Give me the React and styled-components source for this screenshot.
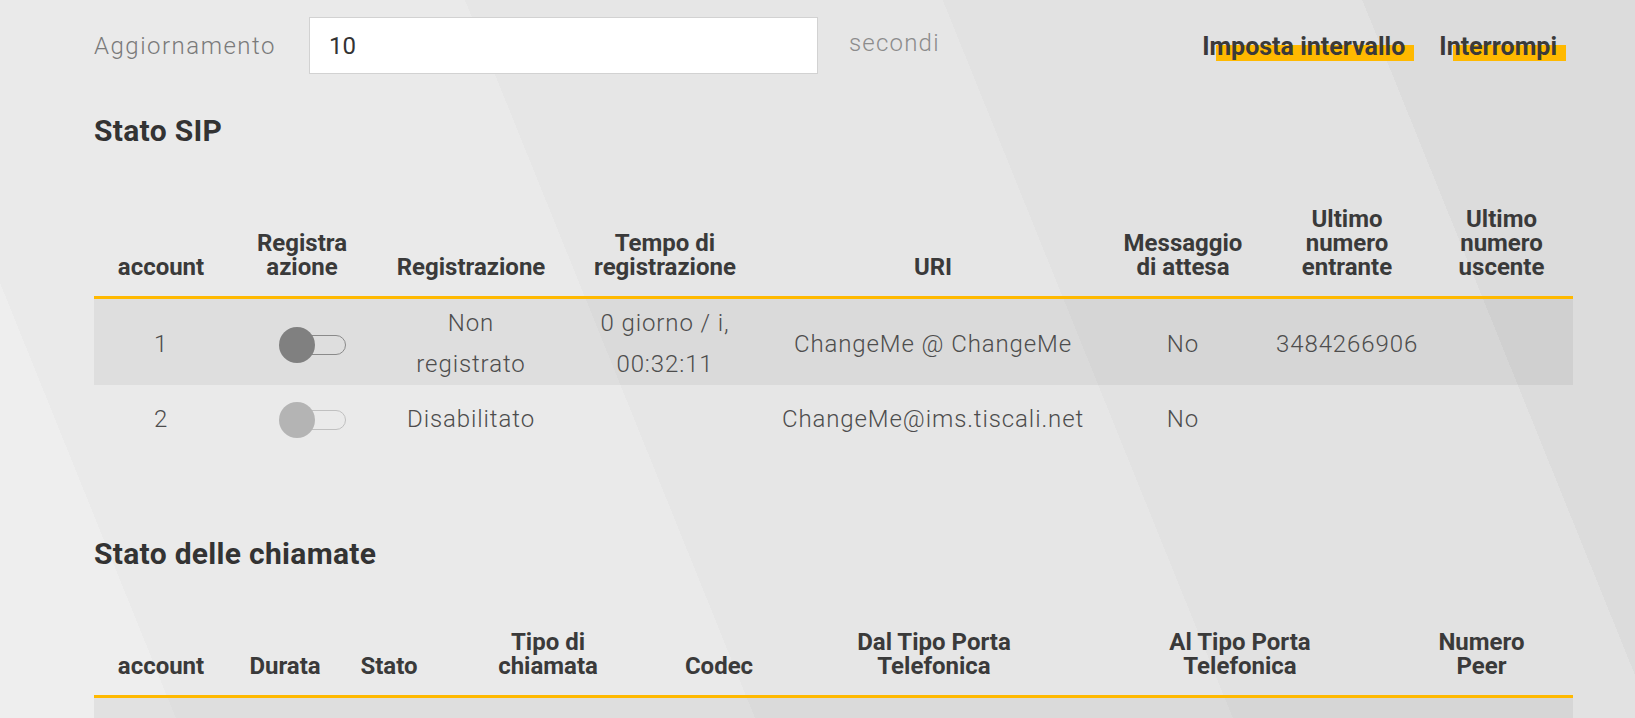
import React from "react";
import styled, { createGlobalStyle } from "styled-components";

const GlobalStyle = createGlobalStyle`
  html, body {
    margin: 0;
    padding: 0;
  }
  body {
    min-height: 100vh;
    font-family: Roboto, "Liberation Sans", sans-serif;
    color: #4d4d4d;
    background-color: #e8e8e8;
    /* soft diagonal panes of the router ui background */
    background-image: linear-gradient(
      68deg,
      #eeeeee 0px,
      #eeeeee 163px,
      #eaeaea 163px,
      #eaeaea 700px,
      #e6e6e6 700px,
      #e6e6e6 1143px,
      #e2e2e2 1143px,
      #e2e2e2 1532px,
      #dcdcdc 1532px
    );
    background-attachment: fixed;
  }
`;

const YELLOW = "#ffb900";

const Page = styled.main`
    padding: 17px 62px 40px 94px;
`;

const TopBar = styled.div`
    display: flex;
    align-items: center;
    height: 57px;
`;

const FieldLabel = styled.label`
    width: 215px;
    flex: 0 0 auto;
    font-size: 24px;
    font-weight: 300;
    letter-spacing: 1.5px;
    color: #7a7a7a;
`;

const IntervalInput = styled.input`
    box-sizing: border-box;
    width: 509px;
    height: 57px;
    padding: 0 19px;
    border: 1px solid #d2d2d2;
    background: #fff;
    font-family: inherit;
    font-size: 24px;
    color: #333;
    outline: none;
`;

const Unit = styled.span`
    margin: -5px 0 0 31px;
    font-size: 24px;
    font-weight: 300;
    letter-spacing: 1.2px;
    color: #8c8c8c;
`;

const Actions = styled.div`
    display: flex;
    gap: 34px;
    margin: 3px 16px 0 auto;
`;

const LinkButton = styled.button`
    position: relative;
    isolation: isolate;
    padding: 0;
    border: 0;
    background: none;
    font-family: inherit;
    font-size: 25px;
    font-weight: 700;
    line-height: 30px;
    color: #3a3a3a;
    cursor: pointer;

    &::after {
        content: "";
        position: absolute;
        left: 14px;
        right: -9px;
        top: 13px;
        height: 16px;
        background: ${YELLOW};
        z-index: -1;
    }
`;

const SectionTitle = styled.h2`
    margin: ${(p) => p.$top}px 0 0;
    font-size: 30px;
    font-weight: 700;
    line-height: 36px;
    letter-spacing: 0.3px;
    color: #333;
`;

const Table = styled.table`
    width: 100%;
    margin-top: 58px;
    border-collapse: collapse;
    table-layout: fixed;
`;

const Col = styled.col`
    width: ${(p) => p.$w}px;
`;

const Th = styled.th`
    padding: 0 6px 17px;
    border-bottom: 3px solid ${YELLOW};
    font-size: 24px;
    font-weight: 700;
    line-height: 24px;
    color: #3a3a3a;
    text-align: center;
    vertical-align: bottom;
    white-space: pre-line;
`;

const Row = styled.tr`
    height: ${(p) => p.$h || 64}px;
    background: ${(p) => (p.$shade ? "rgba(0, 0, 0, 0.05)" : "transparent")};
`;

const Td = styled.td`
    padding: 4px 12px 0;
    font-size: 24px;
    font-weight: 300;
    letter-spacing: 0.9px;
    line-height: 41px;
    color: #4d4d4d;
    text-align: center;
    vertical-align: middle;
    white-space: pre-line;
`;

const Switch = styled.span`
    position: relative;
    display: inline-block;
    width: 67px;
    height: 36px;
    margin-left: 21px;
    vertical-align: middle;
`;

const Track = styled.span`
    position: absolute;
    left: 11px;
    right: 0;
    top: 8px;
    height: 20px;
    box-sizing: border-box;
    border: 1px solid ${(p) => (p.$active ? "#8a8a8a" : "#c0c0c0")};
    border-radius: 10px;
`;

const Knob = styled.span`
    position: absolute;
    left: 0;
    top: 0;
    width: 36px;
    height: 36px;
    border-radius: 50%;
    background: ${(p) => (p.$active ? "#808080" : "#b4b4b4")};
`;

const Toggle = ({ active }) => (
    <Switch role="switch" aria-checked={false}>
        <Track $active={active} />
        <Knob $active={active} />
    </Switch>
);

const sipCols = [134, 148, 190, 198, 338, 162, 166, 143];
const sipHead = [
    "account",
    "Registra\nazione",
    "Registrazione",
    "Tempo di\nregistrazione",
    "URI",
    "Messaggio\ndi attesa",
    "Ultimo\nnumero\nentrante",
    "Ultimo\nnumero\nuscente",
];
const sipRows = [
    {
        id: 1,
        active: true,
        state: "Non\nregistrato",
        time: "0 giorno / i,\n00:32:11",
        uri: "ChangeMe @ ChangeMe",
        mwi: "No",
        inbound: "3484266906",
        outbound: "",
    },
    {
        id: 2,
        active: false,
        state: "Disabilitato",
        time: "",
        uri: "ChangeMe@ims.tiscali.net",
        mwi: "No",
        inbound: "",
        outbound: "",
    },
];

const callCols = [134, 114, 94, 224, 118, 312, 300, 183];
const callHead = [
    "account",
    "Durata",
    "Stato",
    "Tipo di\nchiamata",
    "Codec",
    "Dal Tipo Porta\nTelefonica",
    "Al Tipo Porta\nTelefonica",
    "Numero\nPeer",
];

const App = () => {
    return (
        <>
            <GlobalStyle />
            <Page>
                <TopBar>
                    <FieldLabel htmlFor="interval">Aggiornamento</FieldLabel>
                    <IntervalInput id="interval" defaultValue="10" />
                    <Unit>secondi</Unit>
                    <Actions>
                        <LinkButton>Imposta intervallo</LinkButton>
                        <LinkButton>Interrompi</LinkButton>
                    </Actions>
                </TopBar>

                <SectionTitle $top={39}>Stato SIP</SectionTitle>
                <Table>
                    <colgroup>
                        {sipCols.map((w, i) => (
                            <Col key={i} $w={w} />
                        ))}
                    </colgroup>
                    <thead>
                        <tr>
                            {sipHead.map((h) => (
                                <Th key={h}>{h}</Th>
                            ))}
                        </tr>
                    </thead>
                    <tbody>
                        {sipRows.map((r, i) => (
                            <Row key={r.id} $shade={i % 2 === 0}>
                                <Td>{r.id}</Td>
                                <Td>
                                    <Toggle active={r.active} />
                                </Td>
                                <Td>{r.state}</Td>
                                <Td>{r.time}</Td>
                                <Td>{r.uri}</Td>
                                <Td>{r.mwi}</Td>
                                <Td>{r.inbound}</Td>
                                <Td>{r.outbound}</Td>
                            </Row>
                        ))}
                    </tbody>
                </Table>

                <SectionTitle $top={87}>Stato delle chiamate</SectionTitle>
                <Table>
                    <colgroup>
                        {callCols.map((w, i) => (
                            <Col key={i} $w={w} />
                        ))}
                    </colgroup>
                    <thead>
                        <tr>
                            {callHead.map((h) => (
                                <Th key={h}>{h}</Th>
                            ))}
                        </tr>
                    </thead>
                    <tbody>
                        <Row $shade $h={40}>
                            <Td colSpan={8} />
                        </Row>
                    </tbody>
                </Table>
            </Page>
        </>
    );
};

export default App;
